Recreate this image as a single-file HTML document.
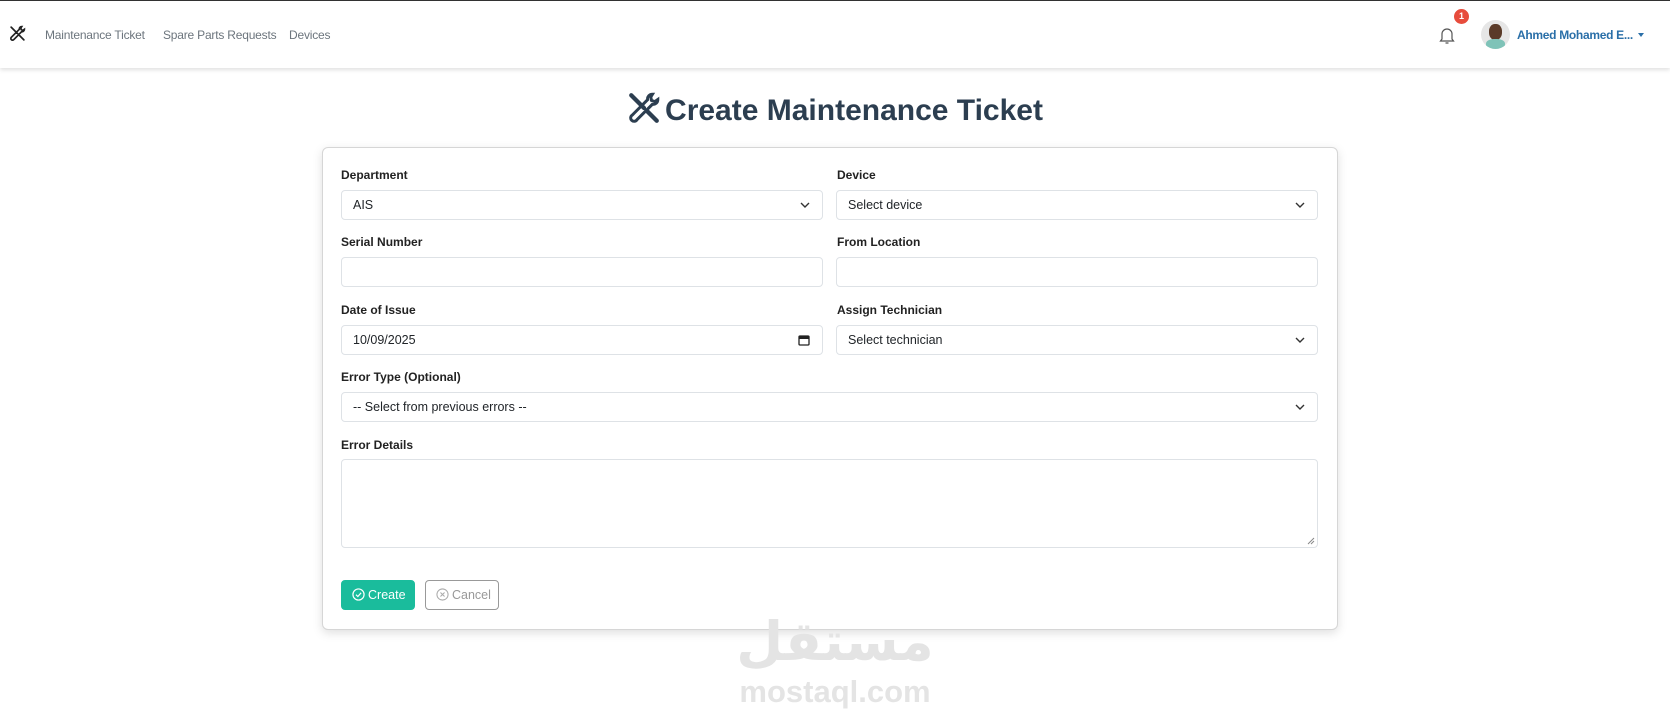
<!DOCTYPE html>
<html><head><meta charset="utf-8"><style>
*{box-sizing:border-box;margin:0;padding:0}
body{width:1670px;height:721px;background:#fff;font-family:"Liberation Sans","DejaVu Sans",sans-serif;position:relative;overflow:hidden;color:#212529}
.top{position:absolute;left:0;top:0;width:1670px;height:1px;background:#333}
.nav{position:absolute;left:0;top:1px;width:1670px;height:67px;background:#fff;box-shadow:0 2px 4px rgba(0,0,0,.12)}
.nav a{position:absolute;top:27px;font-size:12px;color:#6c757d;text-decoration:none;letter-spacing:-0.2px}
.title{position:absolute;left:0;width:1670px;top:91px;text-align:center;font-size:30px;font-weight:bold;color:#2c3e50}
.card{position:absolute;left:322px;top:147px;width:1016px;height:483px;border:1px solid #d6d6d6;border-radius:6px;box-shadow:0 3px 10px rgba(0,0,0,.13);background:#fff}
.lbl{position:absolute;font-size:12px;font-weight:bold;color:#222}
.in{position:absolute;height:30px;border:1px solid #dee2e6;border-radius:4px;background:#fff;font-size:12.5px;line-height:28px;padding-left:11px;color:#212529}
.chev{position:absolute;right:12px;top:10px}
.btn{position:absolute;top:580px;height:30px;border-radius:4px;font-size:12.5px;line-height:28px;padding-left:10px}
.btn svg{vertical-align:-2px;margin-right:3px}
.wm{position:absolute;left:720px;width:230px;text-align:center;color:#e4e4e4;font-weight:bold}
</style></head><body>
<div class="top"></div>
<div class="nav">
<svg style="position:absolute;left:9px;top:24px" width="17" height="17" viewBox="0 0 16 16"><path d="M2 2l12 12M12 1.5c-1.5 0-2.5 1.2-2.3 2.6L2.5 11.3a1.6 1.6 0 1 0 2.2 2.2L11.9 6.3c1.4.2 2.6-.8 2.6-2.3l-1.4 1-1.6-.6-.3-1.6z" stroke="#222" stroke-width="1.6" fill="none" stroke-linecap="round"/></svg>
<a style="left:45px">Maintenance Ticket</a>
<a style="left:163px">Spare Parts Requests</a>
<a style="left:289px">Devices</a>
<svg style="position:absolute;left:1439px;top:25px" width="16" height="19" viewBox="0 0 16 19"><path d="M3 13V8a5 5 0 0 1 10 0v5l1.5 2h-13zM6.5 17h3" stroke="#555" stroke-width="1.2" fill="none"/></svg>
<div style="position:absolute;left:1454px;top:8px;width:15px;height:15px;border-radius:50%;background:#e74c3c;color:#fff;font-size:9px;font-weight:bold;text-align:center;line-height:15px">1</div>
<div style="position:absolute;left:1481px;top:19px;width:29px;height:29px;border-radius:50%;background:#e6e6e6;overflow:hidden"><div style="position:absolute;left:8px;top:4px;width:13px;height:16px;border-radius:45%;background:#5a3a28"></div><div style="position:absolute;left:5px;top:19px;width:19px;height:12px;border-radius:40%;background:#7fc3b8"></div></div>
<div style="position:absolute;left:1517px;top:27px;font-size:12px;font-weight:bold;color:#2a6fa8;letter-spacing:-0.3px">Ahmed Mohamed E...</div>
<div style="position:absolute;left:1638px;top:32px;border-left:3.5px solid transparent;border-right:3.5px solid transparent;border-top:4px solid #2a6fa8"></div>
</div>
<div class="title"><svg width="34" height="34" viewBox="0 0 16 16" style="vertical-align:-5px;margin-right:4px"><path d="M2 2l6 6M9.5 9.5l4.5 4.5" stroke="#2c3e50" stroke-width="2" stroke-linecap="round"/><path d="M12 1.5c-1.5 0-2.5 1.2-2.3 2.6L2.5 11.3a1.6 1.6 0 1 0 2.2 2.2L11.9 6.3c1.4.2 2.6-.8 2.6-2.3l-1.4 1-1.6-.6-.3-1.6z" stroke="#2c3e50" stroke-width="1.4" fill="none"/></svg>Create Maintenance Ticket</div>
<div class="card"></div>
<div class="lbl" style="left:341px;top:168px">Department</div>
<div class="lbl" style="left:837px;top:168px">Device</div>
<div class="in" style="left:341px;top:190px;width:482px">AIS<svg class="chev" width="10" height="8" viewBox="0 0 10 8"><path d="M1 2l4 4 4-4" stroke="#333" stroke-width="1.4" fill="none"/></svg></div>
<div class="in" style="left:836px;top:190px;width:482px">Select device<svg class="chev" width="10" height="8" viewBox="0 0 10 8"><path d="M1 2l4 4 4-4" stroke="#333" stroke-width="1.4" fill="none"/></svg></div>
<div class="lbl" style="left:341px;top:235px">Serial Number</div>
<div class="lbl" style="left:837px;top:235px">From Location</div>
<div class="in" style="left:341px;top:257px;width:482px"></div>
<div class="in" style="left:836px;top:257px;width:482px"></div>
<div class="lbl" style="left:341px;top:303px">Date of Issue</div>
<div class="lbl" style="left:837px;top:303px">Assign Technician</div>
<div class="in" style="left:341px;top:325px;width:482px">10/09/2025<svg class="chev" style="top:8px" width="12" height="12" viewBox="0 0 12 12"><rect x="1" y="2" width="10" height="9" rx="1" stroke="#222" stroke-width="1.3" fill="none"/><rect x="1" y="2" width="10" height="3" fill="#222"/></svg></div>
<div class="in" style="left:836px;top:325px;width:482px">Select technician<svg class="chev" width="10" height="8" viewBox="0 0 10 8"><path d="M1 2l4 4 4-4" stroke="#333" stroke-width="1.4" fill="none"/></svg></div>
<div class="lbl" style="left:341px;top:370px">Error Type (Optional)</div>
<div class="in" style="left:341px;top:392px;width:977px">-- Select from previous errors --<svg class="chev" width="10" height="8" viewBox="0 0 10 8"><path d="M1 2l4 4 4-4" stroke="#333" stroke-width="1.4" fill="none"/></svg></div>
<div class="lbl" style="left:341px;top:438px">Error Details</div>
<div class="in" style="left:341px;top:459px;width:977px;height:89px"><svg style="position:absolute;right:2px;bottom:2px" width="8" height="8"><path d="M1 7L7 1M4 7L7 4" stroke="#888"/></svg></div>
<div class="btn" style="left:341px;width:74px;background:#1abc9c;color:#fff;border:1px solid #1abc9c"><svg width="13" height="13" viewBox="0 0 14 14"><circle cx="7" cy="7" r="6" stroke="#fff" stroke-width="1.3" fill="none"/><path d="M4.3 7.2l2 2 3.5-4" stroke="#fff" stroke-width="1.3" fill="none"/></svg>Create</div>
<div class="btn" style="left:425px;width:74px;border:1px solid #999;color:#999"><svg width="13" height="13" viewBox="0 0 14 14"><circle cx="7" cy="7" r="6" stroke="#aaa" stroke-width="1.1" fill="none"/><path d="M4.8 4.8l4.4 4.4M9.2 4.8l-4.4 4.4" stroke="#aaa" stroke-width="1.1"/></svg>Cancel</div>
<div class="wm" style="top:610px;font-size:54px;font-family:'DejaVu Sans',sans-serif">مستقل</div>
<div class="wm" style="top:674px;font-size:31px">mostaql.com</div>
</body></html>
